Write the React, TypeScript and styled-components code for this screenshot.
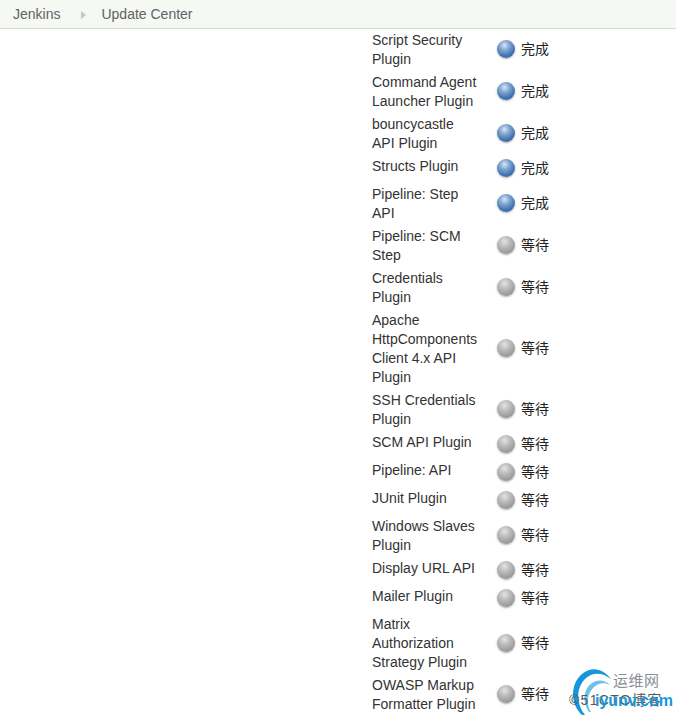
import React from 'react';
import styled, { createGlobalStyle } from 'styled-components';

const GlobalStyle = createGlobalStyle`
  html, body {
    margin: 0;
    padding: 0;
    background: #fff;
    overflow: hidden;
  }
  body {
    font-family: "Liberation Sans", Arial, "Noto Sans CJK SC", sans-serif;
    font-size: 14px;
    color: #333;
  }
`;

const Page = styled.div`
  position: relative;
  width: 676px;
  height: 715px;
  overflow: hidden;
`;

const Breadcrumbs = styled.div`
  display: flex;
  align-items: center;
  height: 28px;
  padding-left: 13px;
  background: #f6f8f3;
  border-bottom: 1px solid #d3d7cf;
  color: #5f6268;
`;

const Crumb = styled.span`
  line-height: 30px;
`;

const Arrow = styled.span`
  width: 0;
  height: 0;
  margin: 2px 15px 0 21px;
  border-left: 5px solid #c4c6c2;
  border-top: 4px solid transparent;
  border-bottom: 4px solid transparent;
`;

const Table = styled.div`
  display: flex;
  flex-direction: column;
  padding-left: 370px;
`;

const Row = styled.div`
  display: flex;
  align-items: flex-start;
  padding: 2px;
`;

const Name = styled.div`
  width: 106px;
  margin-right: 19px;
  line-height: 19px;
  color: #333;
`;

const Status = styled.div`
  display: flex;
  align-items: center;
  align-self: center;
  height: 22px;
  margin-bottom: 2px;
  color: #222;
`;

const StatusLabel = styled.span`
  padding-bottom: 2px;
`;

const Ball = styled.span<{ $done: boolean }>`
  width: 18px;
  height: 18px;
  margin: 0 6px 0 0;
  border-radius: 50%;
  box-shadow: 0 1px 2px rgba(80, 80, 80, 0.45);
  background: ${p =>
    p.$done
      ? 'radial-gradient(circle at 42% 30%, #dbe7f4 0, #86aad4 28%, #4576b3 62%, #2a5a9b 100%)'
      : 'radial-gradient(circle at 42% 30%, #e4e4e4 0, #c0c0c0 30%, #9f9f9f 65%, #868686 100%)'};
`;

const Watermark = styled.div`
  position: absolute;
  right: 0;
  bottom: 0;
  width: 108px;
  height: 52px;
`;

const LogoArcs = styled.svg`
  position: absolute;
  left: 5px;
  top: 5px;
`;

const WatermarkCn = styled.span`
  position: absolute;
  left: 45px;
  top: 9px;
  font-size: 15px;
  line-height: 17px;
  letter-spacing: 0.5px;
  color: #8a8f94;
`;

const WatermarkBlog = styled.span`
  position: absolute;
  left: 1px;
  top: 29px;
  font-size: 14px;
  line-height: 16px;
  letter-spacing: 1.3px;
  color: #5a5a5a;
  white-space: nowrap;
`;

const WatermarkSite = styled.span`
  position: absolute;
  left: 27px;
  top: 29px;
  font-size: 16px;
  line-height: 18px;
  font-weight: bold;
  color: #1697dc;
  white-space: nowrap;
`;

const plugins: { name: string; done?: boolean }[] = [
  { name: 'Script Security Plugin', done: true },
  { name: 'Command Agent Launcher Plugin', done: true },
  { name: 'bouncycastle API Plugin', done: true },
  { name: 'Structs Plugin', done: true },
  { name: 'Pipeline: Step API', done: true },
  { name: 'Pipeline: SCM Step' },
  { name: 'Credentials Plugin' },
  { name: 'Apache HttpComponents Client 4.x API Plugin' },
  { name: 'SSH Credentials Plugin' },
  { name: 'SCM API Plugin' },
  { name: 'Pipeline: API' },
  { name: 'JUnit Plugin' },
  { name: 'Windows Slaves Plugin' },
  { name: 'Display URL API' },
  { name: 'Mailer Plugin' },
  { name: 'Matrix Authorization Strategy Plugin' },
  { name: 'OWASP Markup Formatter Plugin' },
];

export default function App() {
  return (
    <Page>
      <GlobalStyle />
      <Breadcrumbs>
        <Crumb>Jenkins</Crumb>
        <Arrow />
        <Crumb>Update Center</Crumb>
      </Breadcrumbs>
      <Table>
        {plugins.map(p => (
          <Row key={p.name}>
            <Name>{p.name}</Name>
            <Status>
              <Ball $done={!!p.done} />
              <StatusLabel>{p.done ? '完成' : '等待'}</StatusLabel>
            </Status>
          </Row>
        ))}
      </Table>
      <Watermark>
        <LogoArcs width="40" height="47" viewBox="0 0 40 47" fill="none">
          <path d="M9 47C-3 36 -3 16 9 6C18 -2 30 0 38 11C29 4 19 4 12 11C3 20 3 36 12 47Z" fill="#1697dc" />
          <path d="M16 44C9 34 10 21 19 15C25 11 32 12 37 17C31 14 25 15 20 20C14 26 13 36 18 44Z" fill="#6cc0ea" />
        </LogoArcs>
        <WatermarkCn>运维网</WatermarkCn>
        <WatermarkBlog>©51CTO博客</WatermarkBlog>
        <WatermarkSite>iyunv.com</WatermarkSite>
      </Watermark>
    </Page>
  );
}
